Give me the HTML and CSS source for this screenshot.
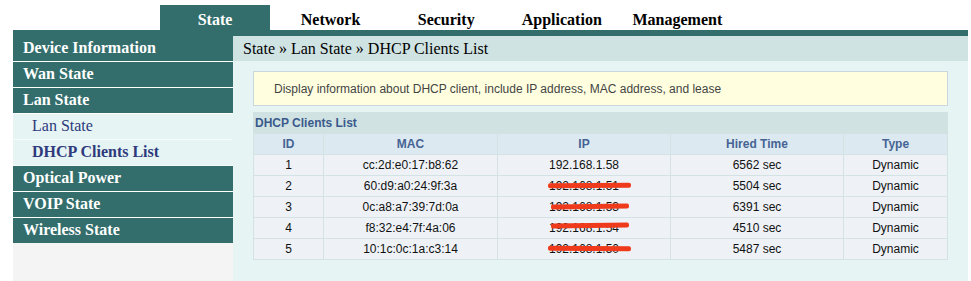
FILE: index.html
```html
<!DOCTYPE html>
<html lang="en">
<head>
  <meta charset="UTF-8">
  <title>DHCP Clients List</title>
  <link rel="stylesheet" href="styles.css">
</head>
<body>
  <div class="page">
    <ul class="topnav">
      <li class="active">State</li>
      <li>Network</li>
      <li>Security</li>
      <li>Application</li>
      <li>Management</li>
    </ul>
    <div class="band"></div>

    <div class="main">
      <ul class="sidebar">
        <li class="group">Device Information</li>
        <li class="group">Wan State</li>
        <li class="group">Lan State</li>
        <li class="sub">Lan State</li>
        <li class="sub current">DHCP Clients List</li>
        <li class="group">Optical Power</li>
        <li class="group">VOIP State</li>
        <li class="group last">Wireless State</li>
      </ul>

      <div class="content">
        <div class="crumb">State &raquo; Lan State &raquo; DHCP Clients List</div>
        <div class="content-body">
          <div class="notice">Display information about DHCP client, include IP address, MAC address, and lease</div>

          <div class="section-title">DHCP Clients List</div>
          <table class="clients">
            <thead>
              <tr>
                <th class="c-id">ID</th>
                <th class="c-mac">MAC</th>
                <th class="c-ip">IP</th>
                <th class="c-time">Hired Time</th>
                <th>Type</th>
              </tr>
            </thead>
            <tbody>
              <tr><td>1</td><td>cc:2d:e0:17:b8:62</td><td>192.168.1.58</td><td>6562 sec</td><td>Dynamic</td></tr>
              <tr><td>2</td><td>60:d9:a0:24:9f:3a</td><td><span class="masked m1">192.168.1.51</span></td><td>5504 sec</td><td>Dynamic</td></tr>
              <tr><td>3</td><td>0c:a8:a7:39:7d:0a</td><td><span class="masked m2">192.168.1.53</span></td><td>6391 sec</td><td>Dynamic</td></tr>
              <tr><td>4</td><td>f8:32:e4:7f:4a:06</td><td><span class="masked m3">192.168.1.54</span></td><td>4510 sec</td><td>Dynamic</td></tr>
              <tr><td>5</td><td>10:1c:0c:1a:c3:14</td><td><span class="masked m4">192.168.1.50</span></td><td>5487 sec</td><td>Dynamic</td></tr>
            </tbody>
          </table>
        </div>
      </div>
    </div>
  </div>
</body>
</html>
```

FILE: styles.css
```css
/* base */
* {
  margin: 0;
  padding: 0;
  box-sizing: border-box;
}

body {
  background-color: #fff;
  font-family: 'Liberation Serif', 'Times New Roman', serif;
}

ul {
  list-style: none;
}

.page {
  width: 955px;
  margin-left: 13px;
}

/* top tabs */
.topnav {
  display: flex;
  height: 30px;
  padding: 5px 0 0 147px;
}

.topnav li {
  width: 110px;
  margin-right: 5.6px;
  height: 25px;
  line-height: 29px;
  text-align: center;
  font-size: 16px;
  font-weight: bold;
  color: #000;
}

.topnav li.active {
  background-color: #336e6c;
  color: #fff;
}

.band {
  height: 6px;
  background-color: #336e6c;
}

/* layout */
.main {
  display: flex;
  min-height: 245px;
}

.sidebar {
  width: 220px;
  background-color: #f4f4f4;
}

.sidebar li {
  height: 26px;
  line-height: 24px;
  font-size: 16px;
  border-bottom: 1px solid #fff;
}

.sidebar .group {
  background-color: #336e6c;
  color: #fff;
  font-weight: bold;
  padding-left: 10px;
}

.sidebar .group.last {
  border-bottom: none;
  height: 25px;
}

.sidebar .sub {
  background-color: #e6f4f4;
  color: #2e3a7c;
  padding-left: 19px;
  border-bottom-color: #f2fafa;
}

.sidebar .sub.current {
  font-weight: bold;
}

.content {
  flex: 1;
  background-color: #e6f4f4;
}

.crumb {
  height: 25px;
  line-height: 26px;
  padding-left: 10px;
  background-color: #d0e3e3;
  font-size: 16px;
  color: #000;
}

.content-body {
  padding: 10px 20px 20px;
  font-family: 'Liberation Sans', Arial, sans-serif;
  font-size: 12px;
}

.notice {
  height: 35px;
  line-height: 34px;
  padding-left: 20px;
  background-color: #ffffe0;
  border: 1px solid #c9d8dc;
  color: #444;
}

.section-title {
  margin-top: 6px;
  height: 21px;
  line-height: 22px;
  padding-left: 2px;
  background-color: #d0e2e2;
  color: #3b5a8c;
  font-weight: bold;
}

/* table */
.clients {
  width: 100%;
  border-collapse: collapse;
  table-layout: fixed;
  color: #111;
}

.clients th,
.clients td {
  height: 21px;
  border: 1px solid #d3e3e3;
  text-align: center;
  padding: 0;
}

.clients th {
  background-color: #dde9f1;
  color: #456494;
  font-weight: bold;
}

.clients td {
  background-color: #eef2f6;
}

.c-id { width: 70px; }
.c-mac { width: 174px; }
.c-ip { width: 173px; }
.c-time { width: 173px; }

/* red marker over the hidden IPs */
.masked {
  position: relative;
}

.masked::after {
  content: '';
  position: absolute;
  height: 5px;
  border-radius: 2px;
  background-color: #f03a1c;
}

.m1::after { left: -1px; right: -12px; top: 4px; transform: rotate(-0.4deg); }
.m2::after { left: 2px; right: -10px; top: 4px; transform: rotate(-0.6deg); }
.m3::after { left: 2px; right: -10px; top: 2px; transform: rotate(-0.6deg); }
.m4::after { left: -1px; right: -12px; top: 4px; transform: rotate(0.3deg); }
```
